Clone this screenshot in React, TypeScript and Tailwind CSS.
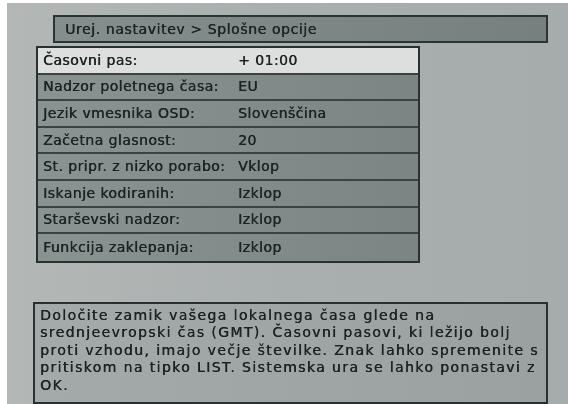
import React from 'react';

const rows: { label: string; value: string }[] = [
  { label: 'Časovni pas:', value: '+ 01:00' },
  { label: 'Nadzor poletnega časa:', value: 'EU' },
  { label: 'Jezik vmesnika OSD:', value: 'Slovenščina' },
  { label: 'Začetna glasnost:', value: '20' },
  { label: 'St. pripr. z nizko porabo:', value: 'Vklop' },
  { label: 'Iskanje kodiranih:', value: 'Izklop' },
  { label: 'Starševski nadzor:', value: 'Izklop' },
  { label: 'Funkcija zaklepanja:', value: 'Izklop' },
];

const help = [
  'Določite zamik vašega lokalnega časa glede na',
  'srednjeevropski čas (GMT). Časovni pasovi, ki ležijo bolj',
  'proti vzhodu, imajo večje številke. Znak lahko spremenite s',
  'pritiskom na tipko LIST. Sistemska ura se lahko ponastavi z',
  'OK.',
];

export default function App() {
  return (
    <div
      className="w-[568px] h-[404px] bg-white pl-[7px] pt-[3px] overflow-hidden text-[#1c2423] [text-shadow:0.4px_0_0_#1c2423]"
      style={{ fontFamily: '"DejaVu Sans", Verdana, sans-serif' }}
    >
      <div className="h-full flex flex-col bg-gradient-to-r from-[#b3b8b7] via-[#a9afae] to-[#a6acab] blur-[0.3px]">
        {/* breadcrumb */}
        <div className="ml-[46px] mt-[12px] w-[495px] h-[28px] border-2 border-[#2c3433] bg-gradient-to-r from-[#848e8c] to-[#76807e] flex items-center pl-[10px] text-[14px] tracking-[0.6px]">
          Urej. nastavitev &gt; Splošne opcije
        </div>

        {/* settings list */}
        <div className="ml-[29px] mt-[3px] w-[384px] border-2 border-[#283030] flex flex-col">
          {rows.map((r, i) => (
            <div
              key={r.label}
              className={`h-[26.6px] flex items-center text-[14px] tracking-[0.45px] ${
                i < rows.length - 1 ? 'border-b-2 border-[#3a4342]' : ''
              } ${i === 0 ? 'bg-[#dcdfdd]' : 'bg-gradient-to-r from-[#8a9391] to-[#7b8583]'}`}
            >
              <span className="min-w-[200px] pl-[5px] pr-[3px] whitespace-nowrap">{r.label}</span>
              <span className="whitespace-nowrap">{r.value}</span>
            </div>
          ))}
        </div>

        {/* help text */}
        <div className="ml-[26px] mt-[39px] w-[515px] h-[102px] border-2 border-[#283030] bg-gradient-to-r from-[#a4aaa9] to-[#9aa1a0] px-[5px] pt-[3px] text-[14px] leading-[17.5px] tracking-[1.4px]">
          {help.map((line) => (
            <div key={line} className="whitespace-nowrap">
              {line}
            </div>
          ))}
        </div>
      </div>
    </div>
  );
}
